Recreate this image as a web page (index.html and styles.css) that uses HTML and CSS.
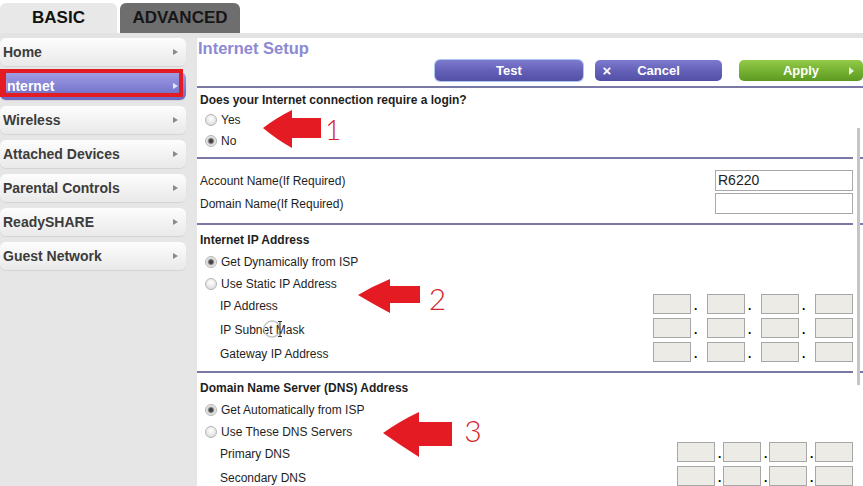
FILE: index.html
```html
<!DOCTYPE html>
<html>
<head>
<meta charset="utf-8">
<title>Internet Setup</title>
<link rel="stylesheet" href="styles.css">
</head>
<body>
<div class="tabs">
  <div class="tab tab-basic">BASIC</div>
  <div class="tab tab-adv">ADVANCED</div>
</div>
<div class="band"></div>
<div class="layout">
  <nav class="sidebar">
    <div class="nav-item"><span>Home</span><i class="caret"></i></div>
    <div class="nav-item active"><span>Internet</span><i class="caret"></i></div>
    <div class="nav-item"><span>Wireless</span><i class="caret"></i></div>
    <div class="nav-item"><span>Attached Devices</span><i class="caret"></i></div>
    <div class="nav-item"><span>Parental Controls</span><i class="caret"></i></div>
    <div class="nav-item"><span>ReadySHARE</span><i class="caret"></i></div>
    <div class="nav-item"><span>Guest Network</span><i class="caret"></i></div>
  </nav>
  <main class="main">
    <div class="title">Internet Setup</div>
    <div class="actions">
      <div class="btn btn-purple btn-test"><span></span><span>Test</span><span></span></div>
      <div class="btn btn-purple btn-cancel"><span class="x">×</span><span>Cancel</span><span></span></div>
      <div class="btn btn-green btn-apply"><span></span><span>Apply</span><span class="play"><i></i></span></div>
    </div>
    <div class="scroll">
      <section class="sec sec1">
        <div class="row h20 bold">Does your Internet connection require a login?</div>
        <div class="row h20"><span class="radio"></span>Yes</div>
        <div class="row h20 down1"><span class="radio checked"></span>No</div>
      </section>
      <section class="sec sec2">
        <div class="row h23">Account Name(If Required)<span class="field">R6220</span></div>
        <div class="row h23">Domain Name(If Required)<span class="field"></span></div>
      </section>
      <section class="sec sec3">
        <div class="row h20 bold">Internet IP Address</div>
        <div class="row h22 down1"><span class="radio checked"></span>Get Dynamically from ISP</div>
        <div class="row h20 down2"><span class="radio"></span>Use Static IP Address</div>
        <div class="row h24 indent"><span class="lbl">IP Address</span>
          <span class="ip"><i class="oct"></i><b class="dot">.</b><i class="oct"></i><b class="dot">.</b><i class="oct"></i><b class="dot">.</b><i class="oct"></i></span>
        </div>
        <div class="row h24 indent"><span class="lbl">IP Subnet Mask</span>
          <span class="ip"><i class="oct"></i><b class="dot">.</b><i class="oct"></i><b class="dot">.</b><i class="oct"></i><b class="dot">.</b><i class="oct"></i></span>
        </div>
        <div class="row h24 indent"><span class="lbl">Gateway IP Address</span>
          <span class="ip"><i class="oct"></i><b class="dot">.</b><i class="oct"></i><b class="dot">.</b><i class="oct"></i><b class="dot">.</b><i class="oct"></i></span>
        </div>
      </section>
      <section class="sec sec4">
        <div class="row h21 bold down1">Domain Name Server (DNS) Address</div>
        <div class="row h22 down1"><span class="radio checked"></span>Get Automatically from ISP</div>
        <div class="row h20 down2"><span class="radio"></span>Use These DNS Servers</div>
        <div class="row h24 indent"><span class="lbl lbl2">Primary DNS</span>
          <span class="ip dns"><i class="oct"></i><b class="dot">.</b><i class="oct"></i><b class="dot">.</b><i class="oct"></i><b class="dot">.</b><i class="oct"></i></span>
        </div>
        <div class="row h24 indent"><span class="lbl lbl2">Secondary DNS</span>
          <span class="ip dns"><i class="oct"></i><b class="dot">.</b><i class="oct"></i><b class="dot">.</b><i class="oct"></i><b class="dot">.</b><i class="oct"></i></span>
        </div>
      </section>
    </div>
  </main>
</div>
<div class="nav-highlight"></div>
<div class="scrollbar"></div>
<svg class="annot" width="863" height="486" viewBox="0 0 863 486">
  <g fill="#e51b23">
    <path d="M263,128 Q276,118 292,110 L292,118 L321,118 L321,138 L292,138 L292,148 Q276,139 263,128 Z"/>
    <path d="M358,295 Q373,286 390,279 L390,286 L420,286 L420,303 L390,303 L390,313 Q373,304 358,295 Z"/>
    <path d="M383,433 Q400,421 419,412 L419,422 L452,422 L452,446 L419,446 L419,457 Q400,445 383,433 Z"/>
  </g>
  <g class="num" fill="#d3262c">
    <text x="333" y="140" font-size="28">1</text>
    <text x="437.5" y="310" font-size="30">2</text>
    <text x="473" y="441.5" font-size="30">3</text>
  </g>
  <g fill="none" stroke="#c4c4c4" stroke-width="1.4">
    <circle cx="272" cy="329" r="8"/>
  </g>
  <g fill="none" stroke="#333" stroke-width="1">
    <path d="M278,321.5 L282,321.5 M280,321.5 L280,336.5 M278,336.5 L282,336.5"/>
  </g>
</svg>
</body>
</html>
```

FILE: styles.css
```css
html, body {
  margin: 0;
  padding: 0;
}
body {
  width: 863px;
  height: 486px;
  overflow: hidden;
  position: relative;
  background: #ffffff;
  font-family: "Liberation Sans", Arial, sans-serif;
  color: #1e1e1e;
}

/* top tabs */
.tabs {
  display: flex;
  gap: 3px;
  height: 33px;
  padding-top: 3px;
  box-sizing: border-box;
}
.tab {
  display: flex;
  align-items: center;
  justify-content: center;
  border-radius: 6px 6px 0 0;
  font-size: 17px;
  font-weight: bold;
  line-height: 30px;
}
.tab-basic {
  width: 117px;
  background: #e8e8e8;
  color: #111;
}
.tab-adv {
  width: 120px;
  background: #6e6e6e;
  color: #161616;
}
.band {
  height: 5px;
  background: #e3e3e3;
}

.layout {
  display: flex;
  height: 448px;
}

/* sidebar */
.sidebar {
  width: 197px;
  flex: none;
  background: #e6e6e6;
  display: flex;
  flex-direction: column;
  gap: 6px;
}
.nav-item {
  width: 186px;
  height: 28px;
  box-sizing: border-box;
  padding: 0 8px 0 3px;
  display: flex;
  align-items: center;
  justify-content: space-between;
  border-radius: 6px;
  background: linear-gradient(#fdfdfd, #f1f1f1 60%, #e9e9e9);
  box-shadow: 0 1px 1px rgba(0, 0, 0, 0.08);
  font-size: 14px;
  font-weight: bold;
  color: #3c3c3c;
}
.caret {
  width: 0;
  height: 0;
  border-left: 5px solid #8a8a8a;
  border-top: 3.5px solid transparent;
  border-bottom: 3.5px solid transparent;
}
.nav-item.active {
  background: linear-gradient(#a09ee4, #8482d4 50%, #6a68c0);
  color: #ffffff;
}
.nav-item.active .caret {
  border-left-color: #e6e6f8;
}
.nav-highlight {
  position: absolute;
  left: 0;
  top: 69px;
  width: 183px;
  height: 28px;
  box-sizing: border-box;
  border: 4px solid #e31b23;
  border-left-width: 6px;
}

/* main */
.main {
  flex: 1;
  display: flex;
  flex-direction: column;
  min-width: 0;
}
.title {
  height: 22px;
  line-height: 20px;
  padding-left: 1px;
  font-size: 16.5px;
  font-weight: bold;
  color: #8d89d3;
}
.actions {
  display: flex;
  justify-content: flex-end;
  height: 21px;
}
.btn {
  height: 21px;
  border-radius: 5px;
  display: grid;
  grid-template-columns: 24px 1fr 24px;
  align-items: center;
  text-align: center;
  color: #ffffff;
  font-size: 13px;
  font-weight: bold;
}
.btn-purple {
  background: linear-gradient(#7d7bce, #6561b9 50%, #524fa5);
}
.btn-green {
  background: linear-gradient(#94ca48, #76b232 50%, #5c9a22);
}
.btn-test {
  width: 148px;
  margin-right: 12px;
  box-shadow: 0 0 0 1px #a9c9ef;
}
.btn-cancel {
  width: 127px;
  margin-right: 17px;
}
.btn-apply {
  width: 124px;
}
.x {
  font-size: 15px;
  line-height: 15px;
}
.play {
  display: flex;
  justify-content: center;
}
.play i {
  width: 0;
  height: 0;
  border-left: 5px solid #eaf6dc;
  border-top: 4px solid transparent;
  border-bottom: 4px solid transparent;
}

.scroll {
  margin-top: 5px;
  overflow: hidden;
  flex: 1;
}
.sec {
  border-top: 2px solid #7a79a6;
  padding: 0 10px 0 3px;
}
.sec1 { padding-top: 2px; padding-bottom: 7px; }
.sec2 { padding-top: 10px; padding-bottom: 8px; }
.sec3 { padding-top: 5px; padding-bottom: 7px; }
.sec4 { padding-top: 4px; }

.row {
  display: flex;
  align-items: center;
  font-size: 12px;
  white-space: nowrap;
  box-sizing: border-box;
}
.h20 { height: 20px; line-height: 20px; }
.h21 { height: 21px; line-height: 21px; }
.h22 { height: 22px; line-height: 22px; }
.h23 { height: 23px; }
.h24 { height: 24px; }
.h20.down1 { padding-top: 2px; line-height: 18px; }
.h21.down1 { padding-top: 2px; line-height: 19px; }
.h22.down1 { padding-top: 2px; line-height: 20px; }
.h20.down2 { padding-top: 4px; line-height: 16px; }
.bold { font-weight: bold; }
.indent { padding-left: 20px; }
.lbl { padding-top: 3px; }
.lbl2 { padding-top: 4px; }

.radio {
  width: 12px;
  height: 12px;
  box-sizing: border-box;
  margin: 0 4px 0 5px;
  border-radius: 50%;
  border: 1px solid #b5b5b5;
  background: radial-gradient(circle at 50% 35%, #ffffff, #e6e6e6 60%, #d2d2d2);
  flex: none;
}
.radio.checked {
  background: radial-gradient(circle at 50% 50%, #3e3e3e 0, #4a4a4a 1.8px, #9c9c9c 2.8px, #dadada 3.6px, #f3f3f3 6px);
}

.field {
  margin-left: auto;
  width: 138px;
  height: 21px;
  box-sizing: border-box;
  border: 1px solid #a9a9a9;
  background: #ffffff;
  font-size: 14px;
  line-height: 19px;
  padding-left: 2px;
  color: #222;
}

.ip {
  margin-left: auto;
  display: flex;
  align-items: center;
}
.oct {
  width: 38px;
  height: 20px;
  box-sizing: border-box;
  border: 1px solid #a7a7a7;
  background: #ecebe5;
}
.dot {
  width: 16px;
  box-sizing: border-box;
  padding-left: 3px;
  padding-top: 3px;
  font-size: 12px;
  color: #000;
}
.ip.dns .dot {
  width: 8px;
}

.scrollbar {
  position: absolute;
  left: 853px;
  top: 128px;
  width: 4px;
  height: 257px;
  background: #ffffff;
  border-right: 3px solid #c5c5c5;
}

.annot {
  position: absolute;
  left: 0;
  top: 0;
  pointer-events: none;
}
.num text {
  font-family: "Lato", "Open Sans", "Liberation Sans", sans-serif;
  font-weight: 300;
  text-anchor: middle;
}
```
